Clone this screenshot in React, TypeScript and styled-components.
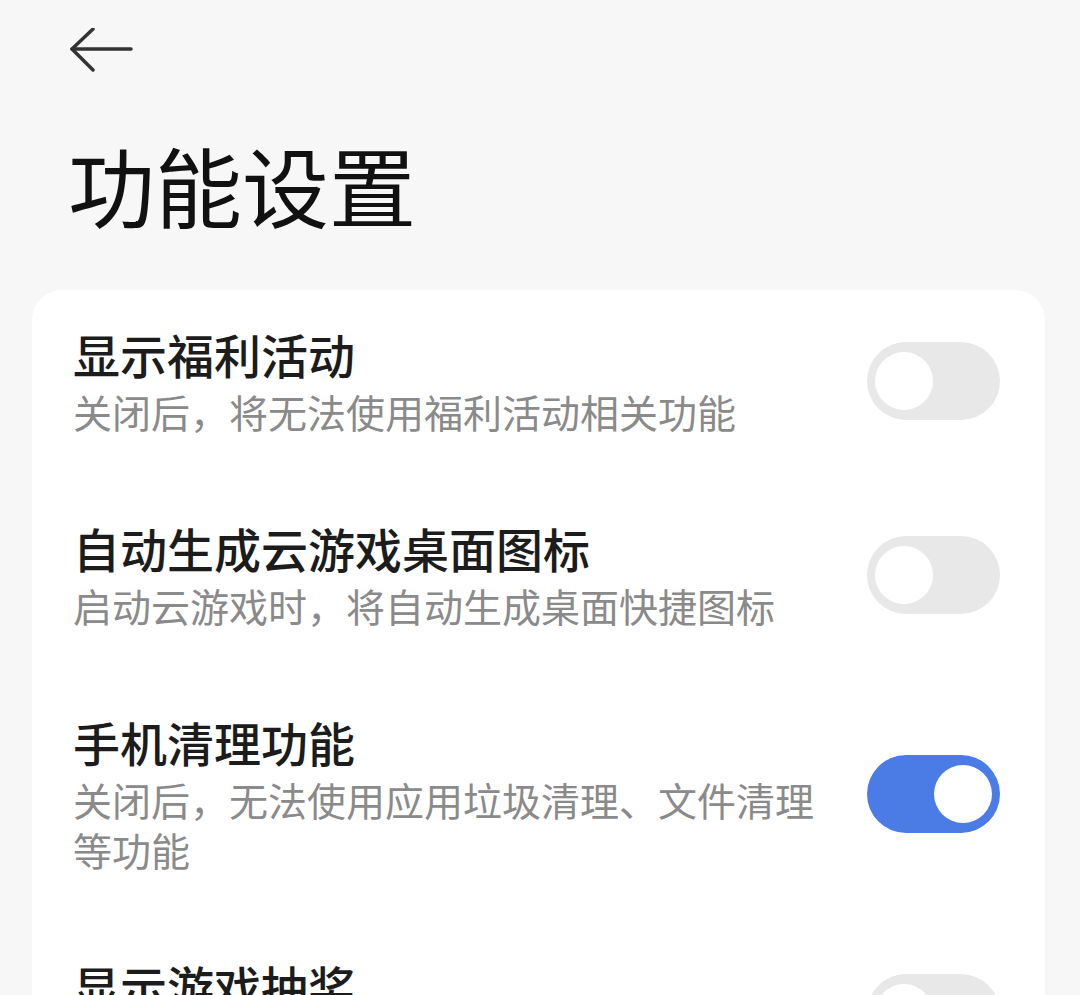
import * as React from "react";
import styled, { createGlobalStyle } from "styled-components";

interface ISetting {
    title: string,
    desc: string,
    on: boolean
}

const settings: Array<ISetting> = [
    {title: "显示福利活动", desc: "关闭后，将无法使用福利活动相关功能", on: false},
    {title: "自动生成云游戏桌面图标", desc: "启动云游戏时，将自动生成桌面快捷图标", on: false},
    {title: "手机清理功能", desc: "关闭后，无法使用应用垃圾清理、文件清理等功能", on: true},
    {title: "显示游戏抽奖", desc: "关闭后，将不再显示游戏抽奖入口", on: false},
];

const GlobalStyle = createGlobalStyle`
    html, body {
        margin: 0;
        padding: 0;
        overflow: hidden;
        background: #f7f7f7;
        font-family: "Noto Sans CJK SC", "Noto Sans", sans-serif;
    }
`;

const Page = styled.div`
    min-height: 995px;
    background: #f7f7f7;
`;

const Header = styled.header`
    display: flex;
    flex-direction: column;
    padding: 28px 0 0 70px;
`;

const BackButton = styled.button`
    width: 64px;
    height: 44px;
    padding: 0;
    border: none;
    background: none;
    color: #333;
    cursor: pointer;
`;

const Title = styled.h1`
    margin: 69px 0 0 -2px;
    font-size: 87px;
    line-height: 1;
    font-weight: 400;
    color: #111;
`;

const Card = styled.section`
    margin: 62px 35px 0 32px;
    background: #fff;
    border-radius: 30px;
`;

const Row = styled.div`
    display: flex;
    align-items: center;
    gap: 33px;
    padding: 42px 45px 42px 41px;

    &:first-child {
        padding-top: 36px;
    }
`;

const Text = styled.div`
    flex: 1;
    min-width: 0;
    display: flex;
    flex-direction: column;
    gap: 4px;
`;

const RowTitle = styled.div`
    font-size: 47px;
    line-height: 56px;
    font-weight: 500;
    color: #1c1c1c;
`;

const RowDesc = styled.div`
    font-size: 39px;
    line-height: 50px;
    color: #8a8a8a;
`;

const Track = styled.div<{ $on: boolean }>`
    position: relative;
    flex: none;
    width: 133px;
    height: 78px;
    border-radius: 39px;
    background: ${props => props.$on ? "#4b7be5" : "#e8e8e8"};
`;

const Knob = styled.span<{ $on: boolean }>`
    position: absolute;
    top: 10px;
    left: ${props => props.$on ? "67px" : "8px"};
    width: 58px;
    height: 58px;
    border-radius: 50%;
    background: #fff;
`;

function Toggle(props: { on: boolean }) {
    return (
        <Track $on={props.on} role="switch" aria-checked={props.on}>
            <Knob $on={props.on}/>
        </Track>
    );
}

export default function App() {
    return (
        <>
            <GlobalStyle/>
            <Page>
                <Header>
                    <BackButton aria-label="返回">
                        <svg width="64" height="44" viewBox="0 0 64 44" fill="none"
                             stroke="currentColor" strokeWidth="3.5"
                             strokeLinecap="round" strokeLinejoin="round">
                            <path d="M2 21H61"/>
                            <path d="M23 1L2 21L23 42"/>
                        </svg>
                    </BackButton>
                    <Title>功能设置</Title>
                </Header>
                <Card>
                    {settings.map(s => (
                        <Row key={s.title}>
                            <Text>
                                <RowTitle>{s.title}</RowTitle>
                                <RowDesc>{s.desc}</RowDesc>
                            </Text>
                            <Toggle on={s.on}/>
                        </Row>
                    ))}
                </Card>
            </Page>
        </>
    );
}
